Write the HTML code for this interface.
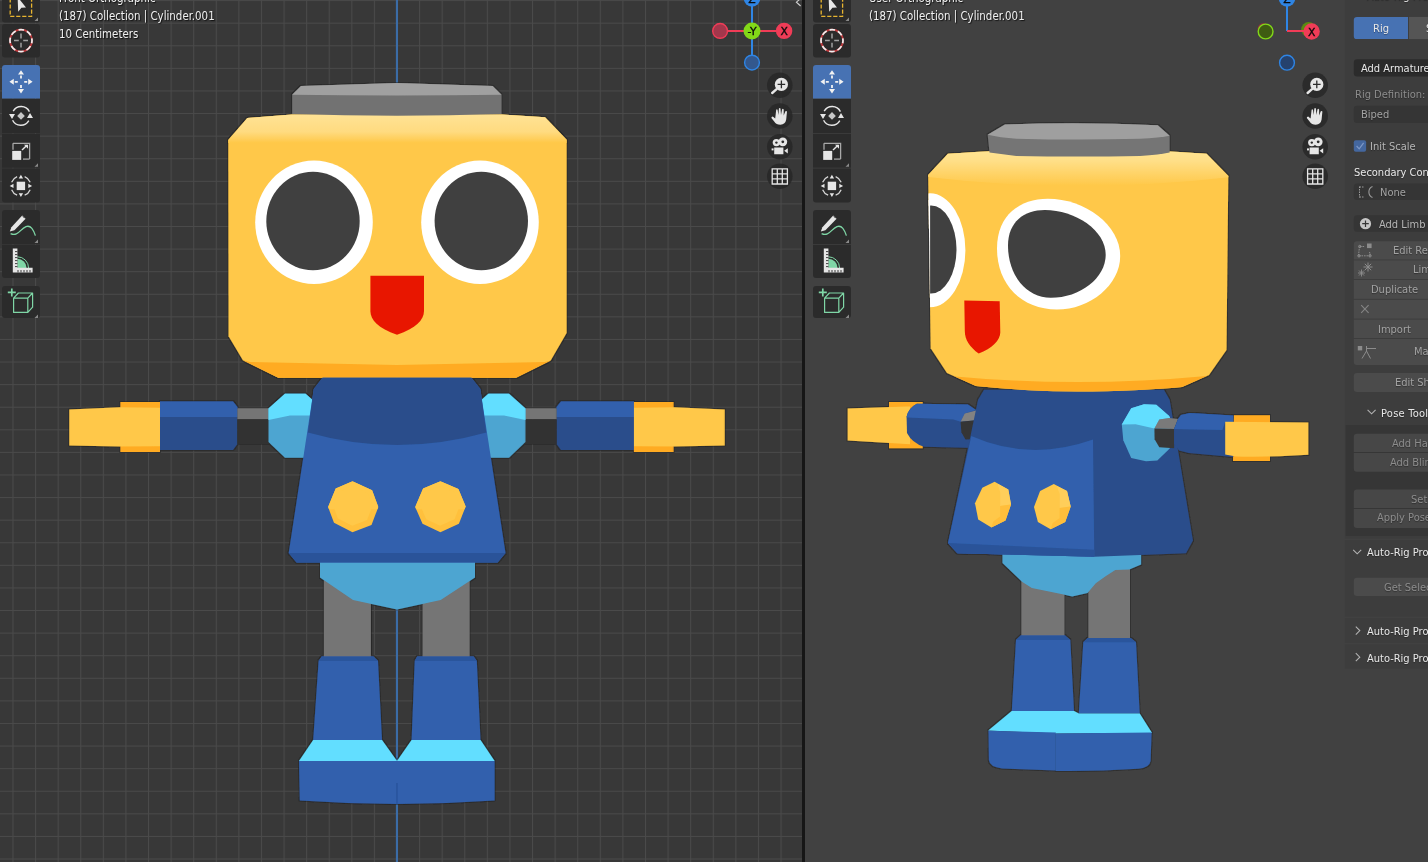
<!DOCTYPE html>
<html><head><meta charset="utf-8"><title>Blender</title>
<style>
html,body{margin:0;padding:0;background:#393939;}
body{width:1428px;height:862px;position:relative;overflow:hidden;font-family:"DejaVu Sans Condensed","Liberation Sans","DejaVu Sans",sans-serif;font-size:11.4px;color:#e6e6e6;}
#scene{position:absolute;left:0;top:0;}
.t{will-change:transform;position:absolute;white-space:nowrap;line-height:14px;text-shadow:1px 1px 1px rgba(0,0,0,.7);color:#f0f0f0;}
.tb{position:absolute;width:38px;background:#2b2b2b;border-radius:3px;}
.p{will-change:transform;position:absolute;white-space:nowrap;line-height:14px;font-size:11px;text-shadow:0 1px 1px rgba(0,0,0,.35);}
.w{color:#e8e8e8;}.g{color:#8c8c8c;}.g2{color:#a2a2a2;}.g3{color:#b6b6b6;}
</style></head><body>
<svg id="scene" width="1428" height="862" viewBox="0 0 1428 862">
<defs>
<pattern id="grid" x="35.05" y="0.1" width="22.59" height="22.59" patternUnits="userSpaceOnUse">
<path d="M0.5 0V22.59M0 0.5H22.59" stroke="#4a4a4a" stroke-width="1" fill="none"/>
</pattern>
<linearGradient id="headTop" x1="0" y1="0" x2="0" y2="1"><stop offset="0" stop-color="#ffe396"/><stop offset=".62" stop-color="#ffdb80"/><stop offset="1" stop-color="#ffc848"/></linearGradient>

<symbol id="i-select" viewBox="0 0 38 34" overflow="visible">
<rect x="8.2" y="-5" width="21.4" height="21.4" fill="none" stroke="#e8b530" stroke-width="1.3" stroke-dasharray="4.2 1.8"/>
<path d="M15.6 -3L24 7.4L19.4 7.8L16.2 11.8Z" fill="#e8e8e8"/>
<path d="M36 17.5V21H32.5Z" fill="#8a8a8a"/>
</symbol>
<symbol id="i-cursor" viewBox="0 0 38 34" overflow="visible">
<circle cx="19" cy="16.6" r="11" fill="none" stroke="#c0393d" stroke-width="1.7"/>
<circle cx="19" cy="16.6" r="11" fill="none" stroke="#f0f0f0" stroke-width="1.7" stroke-dasharray="5.6 3.04" stroke-dashoffset="2.8"/>
<path d="M19 9.6V14.4M19 18.8V23.6M12 16.6H16.8M21.2 16.6H26" stroke="#a0a0a0" stroke-width="1.5" fill="none"/>
</symbol>
<symbol id="i-move" viewBox="0 0 38 34" overflow="visible">
<path d="M19 5.2L22 9.6H16ZM19 28.4L22 24H16ZM7.4 16.8L11.8 13.8V19.8ZM30.6 16.8L26.2 13.8V19.8Z" fill="#f2f2f2"/>
<path d="M19 10.6V13.6M19 20V23M12.8 16.8H15.8M22.2 16.8H25.2" stroke="#f2f2f2" stroke-width="1.8" fill="none"/>
</symbol>
<symbol id="i-rotate" viewBox="0 0 38 34" overflow="visible">
<path d="M11.2 12.2A9.2 9.2 0 0 1 27.4 12.6M26.8 21.6A9.2 9.2 0 0 1 10.6 21.2" fill="none" stroke="#e6e6e6" stroke-width="1.4"/>
<path d="M7 15H13L10 20ZM25 19H31L28 14Z" fill="#e6e6e6"/>
<path d="M19 13L22.8 16.9L19 20.8L15.2 16.9Z" fill="#c8c8c8"/>
</symbol>
<symbol id="i-scale" viewBox="0 0 38 34" overflow="visible">
<path d="M11 9.6H27.6V25.4" fill="none" stroke="#a8a8a8" stroke-width="1.3"/>
<path d="M11 9.6V16" fill="none" stroke="#a8a8a8" stroke-width="1.3"/>
<path d="M21 25.4H27.6" fill="none" stroke="#a8a8a8" stroke-width="1.3"/>
<rect x="10.2" y="17.2" width="9" height="9" fill="#e6e6e6"/>
<path d="M20 16.4L25 11.6" stroke="#e6e6e6" stroke-width="1.4" fill="none"/>
<path d="M22 11H26V15Z" fill="#e6e6e6"/>
<path d="M36 29.5V33H32.5Z" fill="#8a8a8a"/>
</symbol>
<symbol id="i-transform" viewBox="0 0 38 34" overflow="visible">
<rect x="14.7" y="12.9" width="8.4" height="8.4" fill="#e6e6e6"/>
<path d="M18.9 5.9L21.1 9.7H16.7ZM18.9 28.3L21.1 24.5H16.7ZM7.7 17.1L11.5 14.9V19.3ZM30.1 17.1L26.3 14.9V19.3Z" fill="#e6e6e6"/>
<path d="M22.65 7.83A10 10 0 0 1 28.17 13.35M28.17 20.85A10 10 0 0 1 22.65 26.37M15.15 26.37A10 10 0 0 1 9.63 20.85M9.63 13.35A10 10 0 0 1 15.15 7.83" fill="none" stroke="#d8d8d8" stroke-width="1.25"/>
</symbol>
<symbol id="i-annotate" viewBox="0 0 38 34" overflow="visible">
<path d="M7.8 21.6L9.4 17.2L20.2 5.6L23.6 8.8L12.4 20.2Z" fill="#e6e6e6"/>
<path d="M20.8 6.4L22.6 8.2" stroke="#2b2b2b" stroke-width="0.8"/>
<path d="M8.6 23.6C16 27 18 19 24 16.6C29 14.8 31.5 20 33.4 25.6" fill="none" stroke="#7fd6a6" stroke-width="1.3"/>
<path d="M36 29.5V33H32.5Z" fill="#8a8a8a"/>
</symbol>
<symbol id="i-measure" viewBox="0 0 38 34" overflow="visible">
<path d="M15.4 23V13.8A9.2 9.2 0 0 1 24.6 23Z" fill="#7fd6a6"/>
<path d="M15.4 11.8A11.2 11.2 0 0 1 26.6 23" fill="none" stroke="#7fd6a6" stroke-width="1"/>
<path d="M10.8 3.6H15.4V22.8H30.6V27.4H10.8Z" fill="#e6e6e6"/>
<path d="M13 6.6H15.4M13 9.6H15.4M13 12.6H15.4M13 15.6H15.4M13 18.6H15.4M13 21.6H15.4M16 25V27.4M19 25V27.4M22 25V27.4M25 25V27.4M28 25V27.4" stroke="#2b2b2b" stroke-width="0.9" fill="none"/>
</symbol>
<symbol id="i-cube" viewBox="0 0 38 34" overflow="visible">
<path d="M9.8 2.4V10.4M5.8 6.4H13.8" stroke="#7fd6a6" stroke-width="1.7" fill="none"/>
<path d="M11.6 12.2H25.8V26.4H11.6ZM11.6 12.2L16.4 7H30.6L25.8 12.2M30.6 7V21.2L25.8 26.4" fill="none" stroke="#7fd6a6" stroke-width="1.2" stroke-linejoin="round"/>
<path d="M36 28.5V32H32.5Z" fill="#8a8a8a"/>
</symbol>
<g id="toolbar">
<path d="M0 -12H38V19.5a3 3 0 0 1 -3 3H3a3 3 0 0 1 -3 -3Z" fill="#2b2b2b"/>
<use href="#i-select" x="0" y="0" width="38" height="34"/>
<rect x="0" y="24" width="38" height="33.5" rx="3" fill="#2b2b2b"/>
<use href="#i-cursor" x="0" y="24" width="38" height="34"/>
<path d="M3 65H35a3 3 0 0 1 3 3V98.5H0V68a3 3 0 0 1 3 -3Z" fill="#4772b3"/>
<use href="#i-move" x="0" y="65" width="38" height="34"/>
<rect x="0" y="99" width="38" height="34" fill="#2b2b2b"/>
<use href="#i-rotate" x="0" y="99" width="38" height="34"/>
<rect x="0" y="133.7" width="38" height="34" fill="#2b2b2b"/>
<use href="#i-scale" x="0" y="133.7" width="38" height="34"/>
<path d="M0 168.4H38V199.5a3 3 0 0 1 -3 3H3a3 3 0 0 1 -3 -3Z" fill="#2b2b2b"/>
<use href="#i-transform" x="0" y="168.8" width="38" height="34"/>
<path d="M3 210H35a3 3 0 0 1 3 3V244H0V213a3 3 0 0 1 3 -3Z" fill="#2b2b2b"/>
<use href="#i-annotate" x="0" y="210" width="38" height="34"/>
<path d="M0 244.8H38V275a3 3 0 0 1 -3 3H3a3 3 0 0 1 -3 -3Z" fill="#2b2b2b"/>
<use href="#i-measure" x="0" y="245" width="38" height="34"/>
<rect x="0" y="286" width="38" height="32" rx="3" fill="#2b2b2b"/>
<use href="#i-cube" x="0" y="286" width="38" height="34"/>
</g>

<g id="nav">
<circle cx="0" cy="85.3" r="12.8" fill="#262626" fill-opacity=".8"/>
<circle cx="0" cy="116" r="12.8" fill="#262626" fill-opacity=".8"/>
<circle cx="0" cy="146.8" r="12.8" fill="#262626" fill-opacity=".8"/>
<circle cx="0" cy="176.2" r="12.8" fill="#262626" fill-opacity=".8"/>
<!-- zoom -->
<path d="M-3.2 89.2L-7.6 93" stroke="#e6e6e6" stroke-width="2.4" stroke-linecap="round"/>
<circle cx="1.6" cy="84.4" r="6.6" fill="#e6e6e6"/>
<path d="M1.6 80.6V88.2M-2.2 84.4H5.4" stroke="#2a2a2a" stroke-width="1.3"/>
<!-- hand -->
<path d="M-4.6 118.5L-3.6 109.8Q-3 108.6 -2.2 109.8L-1.4 115L-0.9 108.6Q-0.1 107.4 0.7 108.6L1.2 115L2.3 109.2Q3.1 108.2 3.9 109.4L3.9 115.6L5.6 111.2Q6.6 110.4 7.2 111.6L6.4 119.6Q5.6 124.6 0.6 124.8Q-3.6 124.8 -5.6 121.6L-8.4 118Q-8.6 116.4 -7 116.4Z" fill="#e6e6e6"/>
<!-- camera -->
<circle cx="-3.4" cy="142.6" r="3.7" fill="#e6e6e6"/><circle cx="3" cy="141.8" r="4.4" fill="#e6e6e6"/>
<circle cx="-3.4" cy="142.6" r="1.2" fill="#2a2a2a"/><circle cx="3" cy="141.8" r="1.4" fill="#2a2a2a"/>
<path d="M-5.6 147.4H3.6V154.2H-5.6ZM4.4 150.8L8 148.2V153.6Z" fill="#e6e6e6"/>
<path d="M-8.2 148.4H-6.2V150.4H-8.2Z" fill="#e6e6e6"/>
<!-- grid -->
<path d="M-7.6 168.8H7.6V184H-7.6ZM-2.5 168.8V184M2.5 168.8V184M-7.6 173.9H7.6M-7.6 178.9H7.6" fill="none" stroke="#e6e6e6" stroke-width="1.3"/>
</g>
<filter id="ol" x="-3%" y="-3%" width="106%" height="106%">
<feMorphology in="SourceAlpha" operator="dilate" radius="0.55" result="d"/>
<feFlood flood-color="#1e1e1e" flood-opacity=".5"/>
<feComposite in2="d" operator="in" result="o"/>
<feMerge><feMergeNode in="o"/><feMergeNode in="SourceGraphic"/></feMerge>
</filter>
</defs>
<!-- LEFT VIEWPORT -->
<rect x="0" y="0" width="802" height="862" fill="#383838"/>
<rect x="0" y="0" width="802" height="862" fill="url(#grid)"/>
<rect x="395.9" y="0" width="2.1" height="862" fill="#3b6ca6"/>
<g id="robotL" filter="url(#ol)">
<!-- head -->
<polygon points="247.4,118 292,114.6 397,113.5 502,114.6 545,117.2 566.6,139.8 566.6,333 550.7,360.4 516,377.7 278.3,377.7 242.9,360.3 228.6,336.2 228.3,140" fill="#ffc848"/>
<polygon points="247.4,118 292,114.6 397,113.5 502,114.6 545,117.2 566.6,139.8 566.6,143 228.3,143 228.3,140" fill="url(#headTop)"/>
<polygon points="242.9,360.3 250,362 397,365 545,362 550.7,360.4 516,377.7 278.3,377.7" fill="#ffab22"/>
<!-- cap -->
<path d="M292.2 94.8L301 85.9L397 83L492.6 85.9L501.5 94.8V114Q397 117.4 292.2 114Z" fill="#727272"/>
<path d="M292.2 94.8L301 85.9L397 83L492.6 85.9L501.5 94.8Q397 96.2 292.2 94.8Z" fill="#a0a0a0"/>
<!-- eyes -->
<ellipse cx="314" cy="222.3" rx="58.8" ry="61.7" fill="#fff"/>
<ellipse cx="313" cy="221" rx="46.7" ry="49.3" fill="#3f3f3f"/>
<ellipse cx="480" cy="222.3" rx="58.8" ry="61.7" fill="#fff"/>
<ellipse cx="481.3" cy="221" rx="46.7" ry="49.3" fill="#3f3f3f"/>
<!-- mouth -->
<path d="M370.4 275.8H424V311C424 320 416 328 397 334.8C378 328 370.4 320 370.4 311Z" fill="#e81800"/>
<!-- arms left -->
<polygon points="120.4,402 160,402 160,452 120.4,452" fill="#ffab22"/>
<polygon points="69.3,409.4 120,407.3 160,407.8 160,446.2 120,446.4 69.3,445.6" fill="#ffc848"/>
<polygon points="160,401.5 233,401.5 237.4,407 237.4,444 233,450 160,450" fill="#2a4d8b"/>
<polygon points="160,401.5 233,401.5 237.4,407 237.4,417 160,417" fill="#3060ad"/>
<rect x="237.4" y="408.3" width="32" height="11" fill="#747474"/>
<rect x="237.4" y="419.3" width="32" height="24.7" fill="#333"/>
<polygon points="285,393.8 305.5,393.8 312,399.5 312,452 306,457.8 285,457.8 268.5,442 268.5,408.6" fill="#4ea5d1"/>
<polygon points="285,393.8 305.5,393.8 312,399.5 312,415.4 290,415.4 268.5,420 268.5,408.6" fill="#62deff"/>
<!-- arms right (mirror about x=397) -->
<g transform="translate(794 0) scale(-1 1)">
<polygon points="120.4,402 160,402 160,452 120.4,452" fill="#ffab22"/>
<polygon points="69.3,409.4 120,407.3 160,407.8 160,446.2 120,446.4 69.3,445.6" fill="#ffc848"/>
<polygon points="160,401.5 233,401.5 237.4,407 237.4,444 233,450 160,450" fill="#2a4d8b"/>
<polygon points="160,401.5 233,401.5 237.4,407 237.4,417 160,417" fill="#3060ad"/>
<rect x="237.4" y="408.3" width="32" height="11" fill="#747474"/>
<rect x="237.4" y="419.3" width="32" height="24.7" fill="#333"/>
<polygon points="285,393.8 305.5,393.8 312,399.5 312,452 306,457.8 285,457.8 268.5,442 268.5,408.6" fill="#4ea5d1"/>
<polygon points="285,393.8 305.5,393.8 312,399.5 312,415.4 290,415.4 268.5,420 268.5,408.6" fill="#62deff"/>
</g>
<!-- legs -->
<rect x="323.9" y="570" width="47" height="90" fill="#747474"/>
<rect x="422.6" y="570" width="47" height="90" fill="#747474"/>
<!-- pelvis -->
<polygon points="320,560 475,560 475,577.6 440.7,600 397,609.5 353,600 320,577.6" fill="#4ea5d1"/>
<!-- body -->
<polygon points="322.6,377.7 471.4,377.7 480.3,389 505.5,553 497.6,562.6 296.6,562.6 288.7,553 313.8,389" fill="#3060ad"/>
<path d="M322.6 377.7H471.4L480.3 389L486.3 432.4Q397 457.5 307.9 432.4L313.8 389Z" fill="#2a4d8b"/>
<polygon points="288.7,553 505.5,553 497.6,562.6 296.6,562.6" fill="#2b5399"/>
<!-- buttons -->
<polygon points="352.5,481.2 372.1,490.2 378.3,507.0 371.5,524.9 352.5,532.2 334.0,522.7 328.1,507.0 335.7,488.5" fill="#ffc03c"/>
<polygon points="352.5,481.2 372.1,490.2 378.3,507.0 371.5,524.9 352.5,532.2 334.0,522.7 328.1,507.0 335.7,488.5" fill="#ffc848" clip-path="inset(0 0 45% 0)"/>
<polygon points="352.3,486.0 367.6,493.0 372.5,506.1 367.1,520.1 352.3,525.8 337.9,518.4 333.3,506.1 339.2,491.7" fill="#ffc848"/>
<polygon points="440.4,481.2 458.4,489.0 465.7,506.4 458.9,523.8 440.4,532.2 422.5,523.8 415.2,507.0 423.1,488.5" fill="#ffc03c"/>
<polygon points="440.4,481.2 458.4,489.0 465.7,506.4 458.9,523.8 440.4,532.2 422.5,523.8 415.2,507.0 423.1,488.5" fill="#ffc848" clip-path="inset(0 0 45% 0)"/>
<polygon points="440.1,486.0 454.2,492.0 459.9,505.6 454.6,519.2 440.1,525.7 426.2,519.2 420.5,506.1 426.6,491.7" fill="#ffc848"/>
<!-- boots -->
<polygon points="321.7,656.5 373.4,656.5 378,661 382,740 313.2,740 318.6,661" fill="#3060ad"/>
<polygon points="417.2,656.5 473.6,656.5 476.8,661 480.5,740 411.6,740 414.7,661" fill="#3060ad"/>
<polygon points="313.2,740 382,740 397,761 411.6,740 480.5,740 494.6,761 299,761" fill="#62deff"/>
<path d="M299 761H494.6V800.6Q397 807.4 299.8 800.6Z" fill="#3060ad"/>
<rect x="396.3" y="783" width="1.3" height="21" fill="#27478a" opacity=".55"/>
<polygon points="321.7,656.5 373.4,656.5 378,661 318.6,661" fill="#2c559c"/>
<polygon points="417.2,656.5 473.6,656.5 476.8,661 414.7,661" fill="#2c559c"/>
</g>
<!-- DIVIDER -->
<rect x="802" y="0" width="3.1" height="862" fill="#161616"/>
<!-- RIGHT VIEWPORT -->
<rect x="805" y="0" width="623" height="862" fill="#414141"/>
<g id="robotR" filter="url(#ol)">
<!-- legs -->
<rect x="1021.4" y="575" width="43" height="64" fill="#747474"/>
<rect x="1088.4" y="565" width="41.6" height="76" fill="#747474"/>
<!-- pelvis -->
<polygon points="1002.5,552 1141.1,552 1141.1,564.4 1129.3,569.5 1115.3,570 1105.6,576.2 1095.8,583.2 1087.5,592.9 1072.2,596.4 1062.4,594.3 1031.8,588 1022,581.8 1002.5,563" fill="#4ea5d1"/>
<!-- left arm -->
<polygon points="889,402 922.7,402 922.7,448.3 889,448.3" fill="#ffab22"/>
<polygon points="847.7,408.6 906,406.6 910,406.6 910,444.2 906,444 847.7,440.6" fill="#ffc848"/>
<path d="M916.8 403.8L967.9 404.6L976 409.9V448L924.1 446.8Q912 443 907 433L906.6 416.8Q908.5 408 916.8 403.8Z" fill="#2a4d8b"/>
<path d="M916.8 403.8L967.9 404.6L976 409.9L964.7 413.5L960.6 421.7L953.3 419.6L906.8 417.6L906.6 416.8Q908.5 408 916.8 403.8Z" fill="#3060ad"/>
<polygon points="960.6,421.7 964.7,413.5 976,410.6 976,420.3" fill="#828282"/>
<polygon points="960.6,421.7 976,420.3 976,439 965.5,439.5 961.4,432.2" fill="#343434"/>
<!-- body -->
<polygon points="984,389.7 1163.9,389.7 1169.7,400 1192.9,540.5 1186,553.3 1094.3,556.8 957.4,553.3 948,542.9 978,400" fill="#2a4d8b"/>
<path d="M971.3 436Q1030 462 1093 439.6L1094.3 556.8L957.4 553.3L948 542.9Z" fill="#3060ad"/>
<polygon points="948,542.9 1094.3,549.7 1094.3,556.8 957.4,553.3" fill="#2b5399"/>
<!-- buttons -->
<polygon points="994.6,481.8 1008.3,489.6 1011.0,504.6 1005.5,520.5 991.4,527.4 978.2,519.6 975.0,503.2 982.3,487.8" fill="#ffc848"/>
<polygon points="1000.2,492.6 997.6,483.8 1008.3,489.6 1011.0,504.6 1000.2,506.1" fill="#ffce5a"/>
<polygon points="1000.2,506.1 1011.0,504.6 1005.5,520.5 991.4,527.4 993.4,521.4 1000.2,516.5" fill="#ffbe3a"/>
<polygon points="1053.8,484.1 1067.0,490.9 1070.7,506.4 1065.2,521.9 1050.6,529.2 1037.9,521.9 1034.0,506.9 1040.1,490.9" fill="#ffc848"/>
<polygon points="1059.7,493.9 1056.8,486.1 1067.0,490.9 1070.7,506.4 1059.7,507.9" fill="#ffce5a"/>
<polygon points="1059.7,507.9 1070.7,506.4 1065.2,521.9 1050.6,529.2 1052.6,523.2 1059.7,517.9" fill="#ffbe3a"/>
<!-- right arm -->
<polygon points="1131.2,408.2 1144,404.3 1156.3,404.8 1169.2,416.1 1170.1,418.1 1170.1,448 1168.2,450.1 1157.3,460.5 1146,461.2 1131.2,458 1123.3,440.3 1121.8,424.5" fill="#4ea5d1"/>
<polygon points="1121.8,424.5 1131.2,408.2 1144,404.3 1156.3,404.8 1169.2,416.1 1170.1,418.1 1159.3,419.6 1154.4,428.5 1135.6,424.3" fill="#62deff"/>
<polygon points="1159.3,419.6 1169.2,418.1 1178,419.1 1174.1,428.9 1154.4,428.6" fill="#7a7a7a"/>
<polygon points="1154.4,428.6 1174.1,428.9 1174.1,448.2 1159.3,447.2 1154.6,439.3" fill="#393939"/>
<polygon points="1233.9,415.2 1270,415.2 1270,461 1233,461" fill="#ffab22"/>
<path d="M1178 419.1L1181 415.1L1189.9 412.9L1233.2 415.4V457L1188.9 453.1L1179 450.6L1174.1 443.2V428.9Z" fill="#2a4d8b"/>
<path d="M1178 419.1L1181 415.1L1189.9 412.9L1233.2 415.4V422.5H1225L1222.4 429.9L1191.8 429.4L1174.1 428.9Z" fill="#3060ad"/>
<path d="M1225.2 421.8L1308.3 422.6V454.8Q1270 457.4 1236 456.6L1225.2 454.4Z" fill="#ffc848"/>
<!-- boots -->
<polygon points="1020.8,635.6 1065,635.6 1070.3,640 1074,711 1011.8,711 1016,640" fill="#3060ad"/>
<polygon points="1087.8,638 1130.6,638 1136,642.2 1139.7,713.4 1078.8,713.4 1083.3,642.2" fill="#3060ad"/>
<polygon points="1020.8,635.6 1065,635.6 1070.3,640 1016,640" fill="#2c559c"/>
<polygon points="1087.8,638 1130.6,638 1136,642.2 1083.3,642.2" fill="#2c559c"/>
<polygon points="1011.8,711 1074,711 1078.8,713.4 1139.7,713.4 1152,733 1056,733.6 988.3,730.6" fill="#62deff"/>
<path d="M988.5 730.8L1055.8 732.4V770.6L1002 768.4Q989.6 767 988.9 760Z" fill="#3060ad"/>
<path d="M1055.8 733.6L1151.6 732.6L1150.6 761Q1149.5 768 1138 768.8Q1095 771.6 1055.8 771Z" fill="#3060ad"/>
<!-- head -->
<defs><clipPath id="headR"><path d="M948 153.7Q1078 145 1206.5 153.8L1228.3 176L1226.5 350L1209 375L1182 387Q1140 391.2 1077 391.6Q1030 391.5 976 386L947 373L930.7 348.2L928.2 175Z"/></clipPath>
<linearGradient id="headTopR" x1="0" y1="0" x2="0" y2="1"><stop offset="0" stop-color="#ffe89c"/><stop offset=".45" stop-color="#ffdf88"/><stop offset="1" stop-color="#ffc848"/></linearGradient></defs>
<g clip-path="url(#headR)">
<rect x="920" y="140" width="320" height="260" fill="#ffc848"/>
<path d="M920 140H1240V176Q1078 196 920 176Z" fill="url(#headTopR)"/>
<path d="M920 360L949 376Q1078 388 1207 376L1240 360V400H920Z" fill="#ffab22"/>
<ellipse cx="930" cy="250.3" rx="35.4" ry="57" fill="#fff"/>
<ellipse cx="931" cy="249.5" rx="25.5" ry="44" fill="#3f3f3f"/>
<rect x="927" y="200" width="3.1" height="100" fill="#fff"/>
<path d="M997 248.6C997 215 1020 198.8 1047.8 198.8C1085 198.8 1120.2 225 1120.2 256C1120.2 285 1090 309.6 1056.8 309.6C1022 309.6 997 285 997 248.6Z" fill="#fff"/>
<path d="M1008 245.6C1008 222 1024 210 1044.8 210C1075 210 1105.7 230 1105.7 254.7C1105.7 278 1080 297.8 1050.8 297.8C1026 297.8 1008 275 1008 245.6Z" fill="#3f3f3f"/>
<path d="M964.3 300.4L999.7 301.3L1000.3 332.6C1000.3 340 992 349 978.7 353.5C970 347 964.8 340 964.8 330.9Z" fill="#e81800"/>
</g>
<!-- cap -->
<path d="M987.7 134.7L1005 124.6Q1078 121.5 1157.7 125.2L1169.6 135.8L1169.6 152.6Q1160 154.8 1140 156Q1078 157 1016.4 156L989.5 152.6Z" fill="#747474"/>
<path d="M987.7 134.7L1005 124.6Q1078 121.5 1157.7 125.2L1169.6 135.8Q1160 138 1140 138.8Q1078 140.4 1016.4 138.7Q1000 137.6 987.7 134.7Z" fill="#9f9f9f"/>
</g>
</g>
<!-- N PANEL -->
<g id="npanel">
<rect x="1344.8" y="0" width="83" height="538.5" fill="#3d3d3d"/>
<rect x="1344.8" y="540" width="83" height="76.5" fill="#3d3d3d"/>
<rect x="1344.8" y="618" width="83" height="25" fill="#3d3d3d"/>
<rect x="1344.8" y="644.5" width="83" height="24" fill="#3d3d3d"/>
<rect x="1345.7" y="425" width="83" height="111" fill="#363636"/>
<!-- tabs -->
<path d="M1357 16.9H1408V39.1H1357a3.2 3.2 0 0 1 -3.2 -3.2V20.1a3.2 3.2 0 0 1 3.2 -3.2Z" fill="#4772b3"/>
<rect x="1408.9" y="16.9" width="20" height="22.2" fill="#555"/>
<!-- add armature -->
<path d="M1357 59.3H1430V76.5H1357a3.2 3.2 0 0 1 -3.2 -3.2V62.5a3.2 3.2 0 0 1 3.2 -3.2Z" fill="#2b2b2b"/>
<!-- biped -->
<path d="M1357 105.7H1430V123H1357a3.2 3.2 0 0 1 -3.2 -3.2V108.9a3.2 3.2 0 0 1 3.2 -3.2Z" fill="#353535"/>
<!-- checkbox -->
<rect x="1353.8" y="140.2" width="12.3" height="11.6" rx="2" fill="#44679f"/>
<path d="M1356.6 146L1359.2 148.8L1363.6 142.8" fill="none" stroke="#7e98c6" stroke-width="1.2"/>
<!-- none -->
<path d="M1357 183.5H1430V200H1357a3.2 3.2 0 0 1 -3.2 -3.2V186.7a3.2 3.2 0 0 1 3.2 -3.2Z" fill="#353535"/>
<path d="M1359.5 186.5V197.5M1359.5 187H1364M1359.5 197H1364" fill="none" stroke="#9a9a9a" stroke-width="1" stroke-dasharray="1.5 1"/>
<path d="M1372.5 186.5A6 6 0 0 0 1372.5 197.5" fill="none" stroke="#9a9a9a" stroke-width="1.1"/>
<!-- add limb -->
<path d="M1357 215.2H1430V231.8H1357a3.2 3.2 0 0 1 -3.2 -3.2V218.4a3.2 3.2 0 0 1 3.2 -3.2Z" fill="#353535"/>
<circle cx="1365.5" cy="223.7" r="5.6" fill="#c6c6c6"/>
<path d="M1365.5 220.4V227M1362.2 223.7H1368.8" stroke="#353535" stroke-width="1.2"/>
<!-- rows -->
<path d="M1357 241.2H1430V259.4H1353.8V244.4a3.2 3.2 0 0 1 3.2 -3.2Z" fill="#4b4b4b"/>
<rect x="1353.8" y="260.4" width="76" height="18.6" fill="#4b4b4b"/>
<rect x="1353.8" y="280" width="76" height="18.8" fill="#4b4b4b"/>
<rect x="1353.8" y="299.8" width="76" height="18.8" fill="#4b4b4b"/>
<rect x="1353.8" y="319.6" width="76" height="18.4" fill="#4b4b4b"/>
<path d="M1353.8 339H1430V364.9H1357a3.2 3.2 0 0 1 -3.2 -3.2Z" fill="#4b4b4b"/>
<path d="M1357 373H1430V392H1357a3.2 3.2 0 0 1 -3.2 -3.2V376.2a3.2 3.2 0 0 1 3.2 -3.2Z" fill="#4b4b4b"/>
<!-- row icons -->
<g fill="none" stroke="#8c8c8c" stroke-width="1">
<path d="M1359.5 246.5L1358.5 255.5M1369.5 252L1370.5 255.5M1359 255.8H1370M1360 246.5H1364.5" stroke-dasharray="1.6 .9"/>
<circle cx="1359" cy="255.8" r="1.2"/><circle cx="1370" cy="255.8" r="1.2"/><circle cx="1359.8" cy="246.5" r="1.2"/>
<path d="M1368 262.5V271.5M1363.5 267H1372.5M1364.8 263.8L1371.2 270.2M1371.2 263.8L1364.8 270.2" />
<path d="M1361.5 269.5V276.5M1358 273H1365M1359 270.5L1364 275.5M1364 270.5L1359 275.5" stroke-width=".9"/>
<path d="M1361.2 305.2L1368.6 312.8M1368.6 305.2L1361.2 312.8" stroke="#858585" stroke-width="1.1"/>
<path d="M1366.5 346L1366.5 351L1362 358.5M1366.5 351L1370.5 358.5M1367 348.5H1376" stroke="#8c8c8c"/>
</g>
<rect x="1367" y="243.5" width="4.6" height="4.6" fill="#8c8c8c"/>
<rect x="1357.8" y="346" width="4.4" height="4.4" fill="#8c8c8c"/>
<!-- pose tools buttons -->
<path d="M1357 433.8H1430V452H1353.8V437a3.2 3.2 0 0 1 3.2 -3.2Z" fill="#474747"/>
<path d="M1353.8 453H1430V471.8H1357a3.2 3.2 0 0 1 -3.2 -3.2Z" fill="#474747"/>
<path d="M1357 489.6H1430V508H1353.8V492.8a3.2 3.2 0 0 1 3.2 -3.2Z" fill="#474747"/>
<path d="M1353.8 509H1430V528H1357a3.2 3.2 0 0 1 -3.2 -3.2Z" fill="#474747"/>
<path d="M1357 577.7H1430V596H1357a3.2 3.2 0 0 1 -3.2 -3.2V580.9a3.2 3.2 0 0 1 3.2 -3.2Z" fill="#4b4b4b"/>
<!-- chevrons -->
<g fill="none" stroke="#b4b4b4" stroke-width="1.05">
<path d="M1367.6 409.8L1371.6 413.8L1375.6 409.8"/>
<path d="M1353.2 549.8L1357.2 553.8L1361.2 549.8"/>
<path d="M1355.8 626.6L1359.8 630.6L1355.8 634.6"/>
<path d="M1355.8 653.2L1359.8 657.2L1355.8 661.2"/>
</g>
</g>

<!-- gizmo left -->
<g id="gizL">
<path d="M728 30.9H776" stroke="#f03c57" stroke-width="2"/>
<path d="M752 6H752V55" stroke="#2f85e4" stroke-width="2"/>
<circle cx="720.1" cy="30.9" r="7.4" fill="#a3374c" stroke="#f03c57" stroke-width="1.4"/>
<circle cx="784.1" cy="30.9" r="8.2" fill="#f03c57"/>
<circle cx="752" cy="-1.5" r="8.2" fill="#2f85e4"/>
<circle cx="752" cy="62.6" r="7.4" fill="#33588e" stroke="#2f85e4" stroke-width="1.4"/>
<circle cx="752" cy="30.9" r="8.5" fill="#82d818"/>
<text x="752" y="35" font-size="10.8" text-anchor="middle" fill="#0a0a0a" stroke="#0a0a0a" stroke-width=".35" font-family="DejaVu Sans,Liberation Sans,sans-serif">-Y</text>
<text x="784.1" y="35" font-size="10.8" text-anchor="middle" fill="#0a0a0a" stroke="#0a0a0a" stroke-width=".35" font-family="DejaVu Sans,Liberation Sans,sans-serif">X</text>
<text x="752" y="2.5" font-size="10.8" text-anchor="middle" fill="#0a0a0a" stroke="#0a0a0a" stroke-width=".35" font-family="DejaVu Sans,Liberation Sans,sans-serif">Z</text>
</g>
<use href="#nav" x="779.8" y="0"/>
<path d="M800.6 -1.5L796.4 2.2L800.6 6" fill="none" stroke="#d0d0d0" stroke-width="1.1"/>
<!-- gizmo right -->
<g id="gizR">
<path d="M1287 31V6" stroke="#2f85e4" stroke-width="2"/>
<circle cx="1308.6" cy="29.4" r="7.4" fill="#5a8a10"/>
<path d="M1287 31H1306" stroke="#f03c57" stroke-width="2"/>
<circle cx="1263.5" cy="29" r="6" fill="#8a3040"/>
<circle cx="1265.6" cy="31.5" r="7.4" fill="#3f5c12" stroke="#82d818" stroke-width="1.4"/>
<circle cx="1287" cy="62.7" r="7.4" fill="#25426e" stroke="#2f85e4" stroke-width="1.4"/>
<circle cx="1287" cy="-1.5" r="8.2" fill="#2f85e4"/>
<circle cx="1311.6" cy="31.5" r="8.2" fill="#f03c57"/>
<text x="1311.6" y="35.6" font-size="10.8" text-anchor="middle" fill="#0a0a0a" stroke="#0a0a0a" stroke-width=".35" font-family="DejaVu Sans,Liberation Sans,sans-serif">X</text>
<text x="1287" y="2.5" font-size="10.8" text-anchor="middle" fill="#0a0a0a" stroke="#0a0a0a" stroke-width=".35" font-family="DejaVu Sans,Liberation Sans,sans-serif">Z</text>
</g>
<use href="#nav" x="1315.2" y="0"/>
<use href="#toolbar" x="2" y="0"/>
<use href="#toolbar" x="813" y="0"/>
</svg>

<div class="t" style="left:58.5px;top:-8.9px">Front Orthographic</div>
<div class="t" style="left:58.5px;top:9.1px">(187) Collection | Cylinder.001</div>
<div class="t" style="left:58.5px;top:26.8px">10 Centimeters</div>
<div class="t" style="left:869px;top:-8.9px">User Orthographic</div>
<div class="t" style="left:869px;top:9.1px">(187) Collection | Cylinder.001</div>
<div id="ptxt">
<div class="p w" style="left:1367.3px;top:-10.3px">Auto-Rig Pro: Rig</div>
<div class="p w" style="left:1373.0px;top:22.3px">Rig</div>
<div class="p w" style="left:1425.5px;top:22.3px">Skin</div>
<div class="p w" style="left:1361px;top:61.5px">Add Armature</div>
<div class="p g" style="left:1354.7px;top:88.2px">Rig Definition:</div>
<div class="p g2" style="left:1361.0px;top:108.2px">Biped</div>
<div class="p g3" style="left:1370.4px;top:139.9px">Init Scale</div>
<div class="p w" style="left:1354.3px;top:165.5px">Secondary Controllers:</div>
<div class="p g2" style="left:1379.5px;top:186.3px">None</div>
<div class="p g3" style="left:1378.9px;top:218.0px">Add Limb</div>
<div class="p g2" style="left:1392.6px;top:243.6px">Edit Reference Bones</div>
<div class="p g2" style="left:1413.3px;top:262.8px">Limb Options</div>
<div class="p g2" style="left:1370.7px;top:282.5px">Duplicate</div>
<div class="p g2" style="left:1378.3px;top:322.7px">Import</div>
<div class="p g2" style="left:1414.4px;top:345.4px">Match to Rig</div>
<div class="p g2" style="left:1395.4px;top:375.6px">Edit Shape...</div>
<div class="p w" style="left:1381.0px;top:406.9px;letter-spacing:.25px">Pose Tools</div>
<div class="p g" style="left:1391.6px;top:436.8px">Add Hand Fist</div>
<div class="p g" style="left:1389.9px;top:455.6px">Add Blink Pose</div>
<div class="p g" style="left:1410.6px;top:492.7px">Set Pose</div>
<div class="p g" style="left:1377.0px;top:511.2px">Apply Pose as Rest Pose</div>
<div class="p w" style="left:1367.3px;top:545.7px">Auto-Rig Pro: Smart</div>
<div class="p g" style="left:1384.2px;top:581.2px">Get Selected Objects</div>
<div class="p w" style="left:1367.3px;top:624.8px">Auto-Rig Pro: Remap</div>
<div class="p w" style="left:1367.3px;top:651.7px">Auto-Rig Pro: Export</div>
</div>
</body></html>
